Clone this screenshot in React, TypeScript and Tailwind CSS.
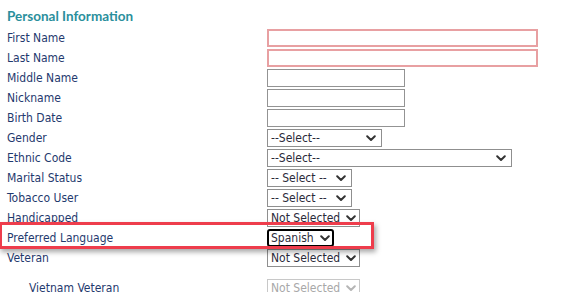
const labelFont = { fontFamily: '"DejaVu Sans Condensed","DejaVu Sans",sans-serif' };

function Chevron({ muted }: { muted?: boolean }) {
  return (
    <svg width="10" height="7" viewBox="0 0 10 7" className="shrink-0">
      <path
        d="M1.2 1.3 L5 5 L8.8 1.3"
        fill="none"
        stroke={muted ? "#b5b5b5" : "#333"}
        strokeWidth="2"
        strokeLinecap="round"
        strokeLinejoin="round"
      />
    </svg>
  );
}

function Select({
  text,
  w,
  muted,
  focus,
}: {
  text: string;
  w: string;
  muted?: boolean;
  focus?: boolean;
}) {
  const border = focus
    ? "border-2 border-black rounded-[3px] pl-[2px] pr-[6px]"
    : muted
    ? "border border-[#c8c8c8] pl-[3px] pr-[5px]"
    : "border border-[#8f8f8f] pl-[3px] pr-[5px]";
  return (
    <div
      className={`flex h-[18px] items-center justify-between gap-[6px] bg-white text-[12px] leading-none ${border} ${w} ${
        muted ? "text-[#a8a8a8]" : "text-[#2b2b3a]"
      }`}
      style={labelFont}
    >
      <span className="whitespace-nowrap">{text}</span>
      <Chevron muted={muted} />
    </div>
  );
}

function TextBox({ w, required }: { w: string; required?: boolean }) {
  return (
    <div
      className={`h-[18px] bg-white ${w} ${
        required ? "border-2 border-[#e8a0a2]" : "border border-[#939393]"
      }`}
    />
  );
}

function Row({
  label,
  children,
  indent,
  className = "",
}: {
  label: string;
  children: React.ReactNode;
  indent?: boolean;
  className?: string;
}) {
  return (
    <div className={`flex h-[20px] items-start ${className}`}>
      <div
        className={`w-[260px] shrink-0 pt-[1px] text-[12px] leading-[16px] text-[#1f3a6e] ${
          indent ? "pl-[22px]" : ""
        }`}
        style={labelFont}
      >
        {label}
      </div>
      {children}
    </div>
  );
}

export default function App() {
  return (
    <main className="relative h-[292px] w-[571px] overflow-hidden bg-white px-[7px]">
      <h2
        className="h-[29px] pt-[8px] text-[13.5px] font-bold leading-[16px] text-[#2a8f9c]"
        style={{ fontFamily: "Lato, sans-serif" }}
      >
        Personal Information
      </h2>

      <Row label="First Name">
        <TextBox w="w-[271px]" required />
      </Row>
      <Row label="Last Name">
        <TextBox w="w-[271px]" required />
      </Row>
      <Row label="Middle Name">
        <TextBox w="w-[138px]" />
      </Row>
      <Row label="Nickname">
        <TextBox w="w-[138px]" />
      </Row>
      <Row label="Birth Date">
        <TextBox w="w-[138px]" />
      </Row>
      <Row label="Gender">
        <Select text="--Select--" w="w-[115px]" />
      </Row>
      <Row label="Ethnic Code">
        <Select text="--Select--" w="w-[245px]" />
      </Row>
      <Row label="Marital Status">
        <Select text="-- Select --" w="w-[85px]" />
      </Row>
      <Row label="Tobacco User">
        <Select text="-- Select --" w="w-[85px]" />
      </Row>
      <Row label="Handicapped">
        <Select text="Not Selected" w="w-[93px]" />
      </Row>
      <Row label="Preferred Language">
        <Select text="Spanish" w="w-[67px]" focus />
      </Row>
      <Row label="Veteran">
        <Select text="Not Selected" w="w-[93px]" />
      </Row>
      <Row label="Vietnam Veteran" indent className="mt-[10px]">
        <Select text="Not Selected" w="w-[93px]" muted />
      </Row>

      {/* annotation highlight */}
      <div className="pointer-events-none absolute left-[-1px] top-[222px] h-[27px] w-[375px] border-[3px] border-[#ee3d4c] shadow-[2px_3px_5px_rgba(0,0,0,0.35)]" />
    </main>
  );
}
